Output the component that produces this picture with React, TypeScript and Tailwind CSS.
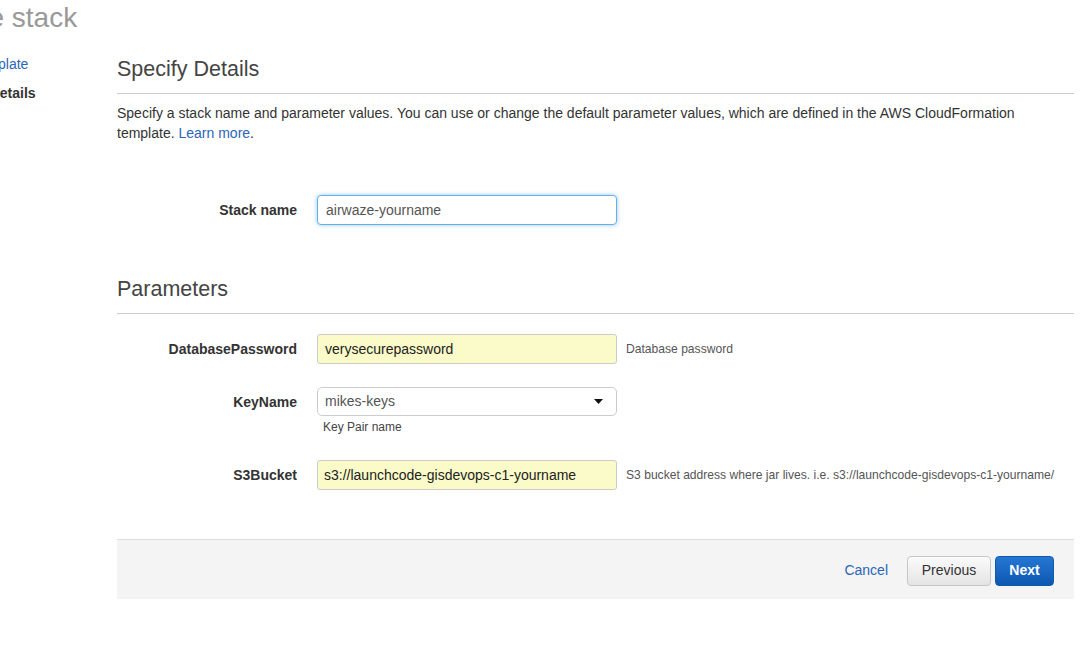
const font = { fontFamily: '"Liberation Sans", Arial, sans-serif' };

const FieldRow = ({
  label,
  children,
  help,
  className = '',
}: {
  label: string;
  children: React.ReactNode;
  help?: React.ReactNode;
  className?: string;
}) => (
  <div className={`flex items-start ${className}`}>
    <div className="w-[180px] shrink-0 text-right text-[14px] font-bold text-[#333] leading-[30px]">{label}</div>
    <div className="ml-[20px] w-[300px] shrink-0">{children}</div>
    {help && <div className="ml-[9px] text-[12.1px] text-[#555] leading-[30px] whitespace-nowrap">{help}</div>}
  </div>
);

const App = () => {
  return (
    <div className="min-h-screen w-[1080px] h-[657px] bg-white overflow-hidden pt-[2px] text-[#333]" style={font}>
      {/* Page title, cut off by the scroll */}
      <h1 className="-ml-[80px] text-[28px] leading-[32px] text-[#999] whitespace-nowrap">Create stack</h1>

      <div className="flex">
        {/* Wizard steps */}
        <nav className="w-[117px] shrink-0 pt-[20px] text-[14px] leading-[20px] whitespace-nowrap">
          <div className="-ml-[71px] text-[#2a66b8]">Select Template</div>
          <div className="-ml-[64px] mt-[9px] font-bold text-[#333]">Specify Details</div>
        </nav>

        {/* Main panel */}
        <main className="w-[957px] shrink-0 pt-[23px]">
          <h2 className="text-[21.5px] leading-[24px] text-[#444]">Specify Details</h2>
          <div className="mt-[12px] border-t border-[#ccc]" />
          <p className="mt-[9px] text-[14px] leading-[20px] text-[#333]">
            Specify a stack name and parameter values. You can use or change the default parameter values, which are defined in the AWS CloudFormation
            <br />
            template. <a className="text-[#2a66b8]">Learn more</a>.
          </p>

          <FieldRow label="Stack name" className="mt-[52px]">
            <div className="h-[30px] rounded-[4px] border border-[#66afe9] shadow-[0_0_4px_rgba(102,175,233,0.7)] bg-white px-[8px] text-[14px] leading-[28px] text-[#555]">
              airwaze-yourname
            </div>
          </FieldRow>

          <h2 className="mt-[52px] text-[21.5px] leading-[24px] text-[#444]">Parameters</h2>
          <div className="mt-[12px] border-t border-[#ccc]" />

          <FieldRow label="DatabasePassword" help="Database password" className="mt-[20px]">
            <div className="h-[30px] rounded-[3px] border border-[#ccc] bg-[#fafbc8] px-[7px] text-[14px] leading-[28px] text-[#222]">
              verysecurepassword
            </div>
          </FieldRow>

          <FieldRow label="KeyName" className="mt-[23px]">
            <div className="h-[29px] rounded-[5px] border border-[#ccc] bg-white px-[7px] flex items-center justify-between text-[14px] text-[#555]">
              <span>mikes-keys</span>
              <svg width="9" height="5" viewBox="0 0 9 5" className="mr-[6px]">
                <path d="M0 0h9L4.5 5z" fill="#111" />
              </svg>
            </div>
            <div className="mt-[3px] pl-[6px] text-[12px] leading-[16px] text-[#444]">Key Pair name</div>
          </FieldRow>

          <FieldRow
            label="S3Bucket"
            help="S3 bucket address where jar lives. i.e. s3://launchcode-gisdevops-c1-yourname/"
            className="mt-[25px]"
          >
            <div className="h-[30px] rounded-[3px] border border-[#ccc] bg-[#fafbc8] px-[6px] text-[14px] leading-[28px] text-[#222] whitespace-nowrap">
              s3://launchcode-gisdevops-c1-yourname
            </div>
          </FieldRow>

          {/* Footer actions */}
          <footer className="mt-[49px] h-[60px] border-t border-[#ddd] bg-[#f4f4f4] flex items-center justify-end pr-[20px] pt-[2px]">
            <a className="text-[14px] text-[#2a66b8] mr-[19px]">Cancel</a>
            <button className="h-[30px] w-[84px] rounded-[4px] border border-[#c6c6c6] bg-gradient-to-b from-[#fbfbfb] to-[#e4e4e4] text-[14px] text-[#333]">
              Previous
            </button>
            <button className="ml-[4px] h-[30px] w-[59px] rounded-[4px] border border-[#0e5aa8] bg-gradient-to-b from-[#2577d3] to-[#0b58b2] text-[14px] font-bold text-white">
              Next
            </button>
          </footer>
        </main>
      </div>
    </div>
  );
};

export default App;
